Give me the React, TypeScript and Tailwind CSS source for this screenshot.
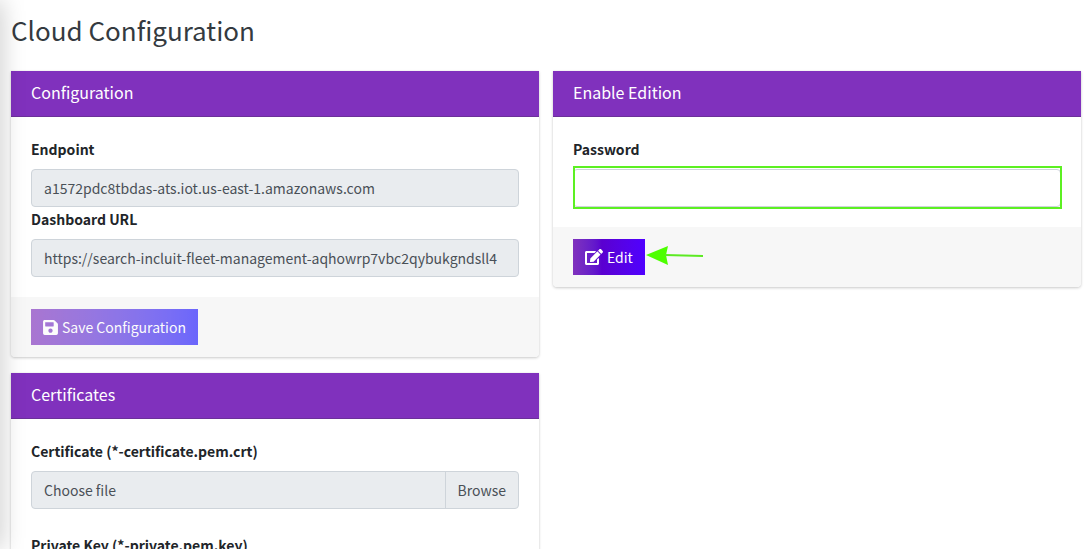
import type { ReactNode } from "react";
import { FaEdit, FaSave } from "react-icons/fa";

function Card({ title, children, footer }: { title: string; children: ReactNode; footer?: ReactNode }) {
  return (
    <section className="rounded-b bg-white shadow-[0_0_1px_rgba(0,0,0,0.13),0_1px_3px_rgba(0,0,0,0.2)]">
      <header className="border-b border-[#6b3199] bg-[#8031bd] px-5 pt-[11px] pb-[13px]">
        <h2 className="text-[16px] leading-[21px] text-white">{title}</h2>
      </header>
      <div className="p-5">{children}</div>
      {footer && <footer className="rounded-b bg-[#f7f7f7] px-5 py-3">{footer}</footer>}
    </section>
  );
}

const labelClass = "mb-2 block text-[14px] leading-6 font-bold text-[#212529]";

function Field({ id, label, value }: { id: string; label: string; value: string }) {
  return (
    <div>
      <label htmlFor={id} className={labelClass}>{label}</label>
      <input
        id={id}
        type="text"
        disabled
        defaultValue={value}
        className="block h-[38px] w-full rounded border border-[#ced4da] bg-[#e9ecef] px-3 text-[14px] leading-6 text-[#495057]"
      />
    </div>
  );
}

function FileField({ id, label }: { id: string; label: string }) {
  return (
    <div>
      <label htmlFor={id} className={labelClass}>{label}</label>
      <input id={id} type="file" disabled className="sr-only" />
      <label
        htmlFor={id}
        className="flex h-[38px] w-full items-stretch overflow-hidden rounded border border-[#ced4da] bg-[#e9ecef] text-[14px] leading-9 text-[#495057]"
      >
        <span className="flex-1 px-3">Choose file</span>
        <span className="border-l border-[#ced4da] px-3">Browse</span>
      </label>
    </div>
  );
}

export default function App() {
  return (
    <div className="relative h-screen overflow-hidden bg-white font-['Noto_Sans_CJK_SC',sans-serif]">
      <div aria-hidden="true" className="pointer-events-none absolute inset-y-0 -left-4 z-10 w-4 shadow-[0_0_24px_rgba(0,0,0,0.26)]" />
      <main className="pr-[10px] pl-[11px]">
        <h1 className="pt-[13px] pb-6 text-[26px] leading-[34px] text-[#343a40]">Cloud Configuration</h1>
        <div className="grid grid-cols-2 items-start gap-[14px]">
          <div className="flex flex-col gap-4">
            <Card
              title="Configuration"
              footer={
                <button
                  type="button"
                  disabled
                  className="flex h-9 items-center gap-1 bg-linear-to-r from-[#8031bd] to-[#2018ff] px-3 text-[14px] leading-6 text-white opacity-65"
                >
                  <FaSave className="h-[17px] w-[15px]" />
                  Save Configuration
                </button>
              }
            >
              <Field id="endpoint" label="Endpoint" value="a1572pdc8tbdas-ats.iot.us-east-1.amazonaws.com" />
              <Field
                id="dashboard"
                label="Dashboard URL"
                value="https://search-incluit-fleet-management-aqhowrp7vbc2qybukgndsll4"
              />
            </Card>
            <Card title="Certificates">
              <div className="flex flex-col gap-6">
                <FileField id="certificate" label="Certificate (*-certificate.pem.crt)" />
                <FileField id="private-key" label="Private Key (*-private.pem.key)" />
              </div>
            </Card>
          </div>
          <Card
            title="Enable Edition"
            footer={
              <div className="flex items-center">
                <button
                  type="button"
                  className="flex h-9 items-center gap-1 bg-linear-to-r from-[#8031bd] via-[#5a00d0] via-40% to-[#5000ff] px-3 text-[14px] leading-6 text-white"
                >
                  <FaEdit className="h-4 w-[18px]" />
                  Edit
                </button>
                <svg aria-hidden="true" width="60" height="24" viewBox="0 0 60 24" className="-mt-1">
                  <path d="M1 12 L23 3 L21 12 L23 22 Z" fill="#4dff00" />
                  <path d="M20 12 L58 13" stroke="#5cea22" strokeWidth="2" />
                </svg>
              </div>
            }
          >
            <label htmlFor="password" className={labelClass}>Password</label>
            <div className="relative">
              <input
                id="password"
                type="password"
                className="block h-[38px] w-full rounded border border-[#ced4da] bg-white px-3 text-[14px] leading-6 text-[#495057] outline-none"
              />
              <div aria-hidden="true" className="pointer-events-none absolute -top-[3px] -right-px -bottom-[2px] left-0 border-2 border-[#5cf022]" />
            </div>
          </Card>
        </div>
      </main>
    </div>
  );
}
